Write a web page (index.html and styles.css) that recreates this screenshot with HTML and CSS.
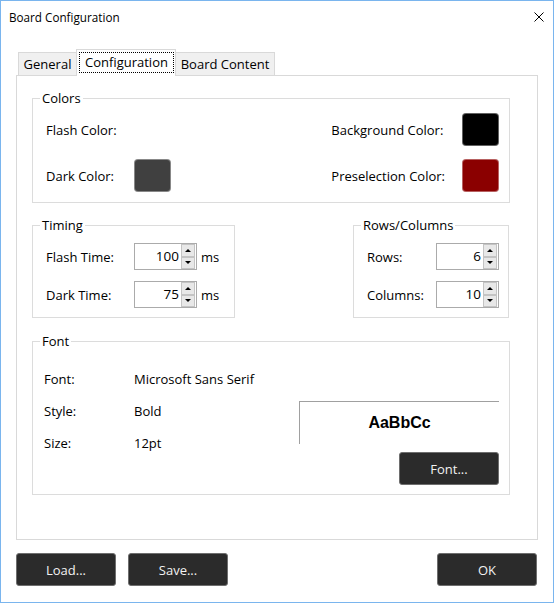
FILE: index.html
```html
<!DOCTYPE html>
<html>
<head>
<meta charset="utf-8">
<link rel="stylesheet" href="styles.css">
</head>
<body>
<div class="window">
  <div class="titlebar">
    <span class="title">Board Configuration</span>
    <svg class="close" width="10" height="10" viewBox="0 0 10 10"><path d="M0.5 0.5 L9.5 9.5 M9.5 0.5 L0.5 9.5" stroke="#000" stroke-width="1" fill="none"/></svg>
  </div>
  <div class="tabs">
    <div class="tab tab-general">General</div>
    <div class="tab tab-active"><span class="focus">Configuration</span></div>
    <div class="tab tab-content">Board Content</div>
  </div>
  <div class="panel">
    <fieldset class="group colors">
      <legend>Colors</legend>
      <div class="color-grid">
        <span class="lbl">Flash Color:</span>
        <span class="swatch swatch-flash"></span>
        <span class="spacer"></span>
        <span class="lbl rlbl">Background Color:</span>
        <span class="swatch swatch-black"></span>
        <span class="lbl">Dark Color:</span>
        <span class="swatch swatch-dark"></span>
        <span class="spacer"></span>
        <span class="lbl rlbl">Preselection Color:</span>
        <span class="swatch swatch-red"></span>
      </div>
    </fieldset>
    <div class="midrow">
      <fieldset class="group timing">
        <legend>Timing</legend>
        <div class="spin-grid timing-grid">
          <span class="lbl">Flash Time:</span>
          <div class="spin"><span class="val">100</span><span class="arrows"><span class="up"></span><span class="down"></span></span></div>
          <span class="unit">ms</span>
          <span class="lbl">Dark Time:</span>
          <div class="spin"><span class="val">75</span><span class="arrows"><span class="up"></span><span class="down"></span></span></div>
          <span class="unit">ms</span>
        </div>
      </fieldset>
      <fieldset class="group rowcol">
        <legend>Rows/Columns</legend>
        <div class="spin-grid rc-grid">
          <span class="lbl">Rows:</span>
          <div class="spin"><span class="val">6</span><span class="arrows"><span class="up"></span><span class="down"></span></span></div>
          <span class="lbl">Columns:</span>
          <div class="spin"><span class="val">10</span><span class="arrows"><span class="up"></span><span class="down"></span></span></div>
        </div>
      </fieldset>
    </div>
    <fieldset class="group fontgroup">
      <legend>Font</legend>
      <div class="font-body">
        <div class="font-info">
          <span class="lbl">Font:</span><span class="fval">Microsoft Sans Serif</span>
          <span class="lbl">Style:</span><span class="fval">Bold</span>
          <span class="lbl">Size:</span><span class="fval">12pt</span>
        </div>
        <div class="font-side">
          <div class="preview">AaBbCc</div>
          <button class="btn btn-font">Font...</button>
        </div>
      </div>
    </fieldset>
  </div>
  <div class="footer">
    <button class="btn">Load...</button>
    <button class="btn btn-save">Save...</button>
    <span class="grow"></span>
    <button class="btn">OK</button>
  </div>
</div>
</body>
</html>
```
FILE: styles.css
```css
* { box-sizing: border-box; }
body { margin: 0; background: #fff; }

.window {
  width: 554px;
  height: 603px;
  border: 1px solid #7ab5ee;
  background: #fff;
  font-family: "Open Sans", "Noto Sans", sans-serif;
  font-size: 13px;
  color: #000;
  display: flex;
  flex-direction: column;
}

.titlebar {
  height: 31px;
  display: flex;
  align-items: center;
  justify-content: space-between;
  padding: 0 9px 0 8px;
}
.title { font-size: 11.7px; }
.close { display: block; margin-top: 1px; }

.tabs {
  display: flex;
  align-items: flex-end;
  margin: 17px 0 0 17px;
  height: 26px;
  position: relative;
  z-index: 1;
}
.tab {
  height: 23px;
  border: 1px solid #d9d9d9;
  border-bottom: none;
  background: #f0f0f0;
  text-align: center;
  line-height: 23px;
}
.tab-general { width: 59px; margin-right: -1px; }
.tab-content { width: 100px; margin-left: -1px; }
.tab-active {
  width: 100px;
  height: 27px;
  margin-bottom: -1px;
  background: #fff;
  padding: 2px 1px 3px 2px;
  display: flex;
}
.focus {
  flex: 1;
  border: 1px dotted #000;
  line-height: 19px;
  text-align: center;
}

.panel {
  margin-left: 15px;
  width: 522px;
  height: 465px;
  border: 1px solid #d9d9d9;
  padding: 14px 27px 0 15px;
}

.group {
  margin: 0;
  padding: 0;
  border: 1px solid #dcdcdc;
  min-width: 0;
}
.group legend {
  margin-left: 7px;
  padding: 0 2px;
  line-height: 17px;
}

.lbl { white-space: nowrap; }

.color-grid {
  display: grid;
  grid-template-columns: 88px 37px 1fr auto 37px;
  row-gap: 13px;
  align-items: center;
  padding: 6px 10px 10px 13px;
}
.rlbl { margin-right: 17px; }
.swatch {
  display: block;
  width: 37px;
  height: 33px;
  border-radius: 4px;
  border: 1px solid rgba(255, 255, 255, 0.38);
}
.swatch-flash { background: #fff; border-color: #fff; }
.swatch-black { background: #000; }
.swatch-dark { background: #404040; }
.swatch-red { background: #8b0000; }

.midrow {
  display: flex;
  justify-content: space-between;
  align-items: flex-start;
  margin-top: 14px;
}
.timing { width: 203px; }
.rowcol { width: 156px; margin-right: 1px; }

.spin-grid {
  display: grid;
  row-gap: 11px;
  align-items: center;
  padding: 9px 0 9px 13px;
}
.timing-grid { grid-template-columns: 88px 63px auto; }
.rc-grid { grid-template-columns: 69px 63px; }
.unit { margin-left: 4px; }

.spin {
  width: 63px;
  height: 27px;
  border: 1px solid #ababab;
  display: flex;
  background: #fff;
}
.val {
  flex: 1;
  text-align: right;
  padding-right: 2px;
  line-height: 25px;
  font-size: 13.5px;
}
.arrows {
  width: 15px;
  display: flex;
  flex-direction: column;
  padding: 0 1px 0 0;
}
.up, .down {
  flex: 1;
  background: #e8e8e8;
  border: 1px solid #c4c4c4;
  display: flex;
  align-items: center;
  justify-content: center;
}
.up::after, .down::after {
  content: "";
  width: 0;
  height: 0;
  border-left: 3px solid transparent;
  border-right: 3px solid transparent;
}
.up::after { border-bottom: 3px solid #000; }
.down::after { border-top: 3px solid #000; }

.fontgroup { margin-top: 15px; }
.font-body {
  display: flex;
  justify-content: space-between;
  padding: 13px 10px 9px 11px;
}
.font-info {
  display: grid;
  grid-template-columns: 90px auto;
  grid-auto-rows: 32px;
  align-items: center;
  align-self: flex-start;
}
.font-side {
  display: flex;
  flex-direction: column;
  align-items: flex-end;
  padding-top: 38px;
}
.preview {
  width: 200px;
  height: 43px;
  border-top: 1px solid #a0a0a0;
  border-left: 1px solid #a0a0a0;
  display: flex;
  align-items: center;
  justify-content: center;
  font-family: "Liberation Sans", Arial, sans-serif;
  font-weight: bold;
  font-size: 16px;
  margin-bottom: 8px;
}

.btn {
  width: 100px;
  height: 33px;
  background: #2b2b2b;
  color: #f2f2f2;
  border: 1px solid #6e6e6e;
  border-radius: 3px;
  font-family: "Open Sans", "Noto Sans", sans-serif;
  font-size: 13px;
  padding: 0;
}

.footer {
  display: flex;
  margin-top: 13px;
  padding: 0 16px 0 15px;
}
.btn-save { margin-left: 12px; }
.grow { flex: 1; }
```
